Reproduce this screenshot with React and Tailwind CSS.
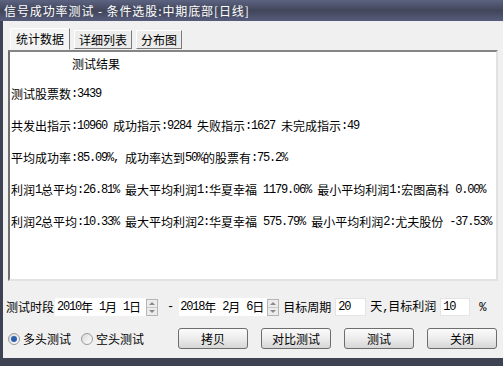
import React from 'react';

// ─── Text helper: ASCII runs get a half-width mono face, CJK stays in Noto ───

function Txt({ text }) {
  const parts = text.split(/([\x20-\x7e]+)/);
  return parts.map((p, i) =>
    /[\x20-\x7e]/.test(p) ? (
      <span key={i} className="font-['Liberation_Mono'] text-[12px] tracking-[-1.2px] whitespace-pre">
        {p}
      </span>
    ) : (
      <span key={i}>{p}</span>
    )
  );
}

const LINES = [
  '测试股票数:3439',
  '共发出指示:10960 成功指示:9284 失败指示:1627 未完成指示:49',
  '平均成功率:85.09%, 成功率达到50%的股票有:75.2%',
  '利润1总平均:26.81% 最大平均利润1:华夏幸福 1179.06% 最小平均利润1:宏图高科 0.00%',
  '利润2总平均:10.33% 最大平均利润2:华夏幸福 575.79% 最小平均利润2:尤夫股份 -37.53%',
];

const TABS = [
  { label: '统计数据', active: true },
  { label: '详细列表' },
  { label: '分布图' },
];

const BUTTONS = ['拷贝', '对比测试', '测试', '关闭'];

// ─── Small controls ─────────────────────────────────────────────────────────

function Spinner() {
  return (
    <div className="flex flex-col w-[12px] h-[17px] border border-[#b5b5b5] bg-[#ececec]">
      <div className="flex-1 flex items-center justify-center border-b border-[#c8c8c8]">
        <div className="w-0 h-0 border-l-[3px] border-r-[3px] border-b-[3px] border-l-transparent border-r-transparent border-b-[#8a8a8a]" />
      </div>
      <div className="flex-1 flex items-center justify-center">
        <div className="w-0 h-0 border-l-[3px] border-r-[3px] border-t-[3px] border-l-transparent border-r-transparent border-t-[#8a8a8a]" />
      </div>
    </div>
  );
}

function Radio({ checked, label }) {
  return (
    <div className="flex items-center gap-[3px]">
      <div className="w-[12px] h-[12px] rounded-full border border-[#9a9a9a] bg-gradient-to-br from-[#d8d8d8] to-[#ffffff] flex items-center justify-center">
        {checked && <div className="w-[6px] h-[6px] rounded-full bg-[#2a5fb0]" />}
      </div>
      <span className="text-[12px] text-black">{label}</span>
    </div>
  );
}

// ─── Window ──────────────────────────────────────────────────────────────────

export default function App() {
  return (
    <div className="w-[503px] h-[366px] bg-[#3e4354] flex flex-col overflow-hidden font-['Noto_Sans_CJK_SC',sans-serif] leading-none">
      {/* Title bar */}
      <div className="h-[21px] shrink-0 flex items-center pl-[4px] bg-gradient-to-b from-[#5c6381] via-[#41465a] to-[#575c7c]">
        <span className="text-white text-[12px] tracking-[0.9px]">
          信号成功率测试<span className="whitespace-pre"> - </span>条件选股:中期底部[日线]
        </span>
      </div>

      {/* Body */}
      <div className="flex-1 ml-[3px] mb-[8px] bg-[#f0f0f0] flex flex-col pt-[7px] pl-[5px] pr-[5px]">
        {/* Tabs */}
        <div className="flex items-end gap-[4px] pl-[2px] h-[22px]">
          {TABS.map((t) => (
            <div
              key={t.label}
              className={
                t.active
                  ? 'h-[22px] px-[5px] flex items-center bg-[#f4f4f4] border border-t-white border-l-white border-r-[#7a7a7a] border-b-[#f4f4f4] text-[12px] text-black'
                  : 'h-[19px] mb-[1px] px-[4px] flex items-center bg-[#ececec] border border-t-white border-l-white border-r-[#7a7a7a] border-b-[#7a7a7a] text-[12px] text-black'
              }
            >
              {t.label}
            </div>
          ))}
        </div>

        {/* Results panel */}
        <div className="h-[231px] bg-white border-2 border-t-[#858585] border-l-[#6f6f6f] border-r-[#e2e2e2] border-b-[#e2e2e2] flex flex-col pt-[5px] pl-[1px] text-[12px] text-black">
          <div className="h-[14px] flex items-center pl-[61px]">测试结果</div>
          <div className="flex flex-col gap-[18px] mt-[16px]">
            {LINES.map((l) => (
              <div key={l} className="h-[14px] flex items-center whitespace-pre">
                <Txt text={l} />
              </div>
            ))}
          </div>
        </div>

        {/* Date / target row */}
        <div className="flex items-center mt-[17px] h-[18px] text-[12px] text-black">
          <span className="ml-[-2px]">测试时段</span>
          <div className="ml-[1px] w-[91px] h-[18px] bg-white flex items-center pl-[2px] whitespace-pre">
            <Txt text="2010年 1月 1日" />
          </div>
          <Spinner />
          <span className="ml-[9px] font-['Liberation_Mono'] text-[12px]">-</span>
          <div className="ml-[5px] w-[88px] h-[18px] bg-white flex items-center pl-[1px] whitespace-pre">
            <Txt text="2018年 2月 6日" />
          </div>
          <Spinner />
          <span className="ml-[4px]">目标周期</span>
          <div className="ml-[4px] w-[31px] h-[18px] bg-white border border-[#e4e4e4] flex items-start pl-[2px] pt-[2px]">
            <Txt text="20" />
          </div>
          <span className="ml-[4px] whitespace-pre">
            <Txt text="天,目标利润" />
          </span>
          <div className="ml-[4px] w-[30px] h-[18px] bg-white border border-[#e4e4e4] flex items-start pl-[2px] pt-[2px]">
            <Txt text="10" />
          </div>
          <span className="ml-[9px]">
            <Txt text="%" />
          </span>
        </div>

        {/* Radios + buttons */}
        <div className="flex items-center mt-[12px] h-[21px]">
          <div className="flex items-center gap-[10px]">
            <Radio checked label="多头测试" />
            <Radio label="空头测试" />
          </div>
          <div className="ml-[34px] flex gap-[13px]">
            {BUTTONS.map((b) => (
              <div
                key={b}
                className="w-[70px] h-[21px] rounded-[3px] border border-[#6d6d6d] bg-gradient-to-b from-[#fbfbfb] via-[#ececec] to-[#d6d6d6] flex items-center justify-center text-[12px] text-black"
              >
                {b}
              </div>
            ))}
          </div>
        </div>
      </div>
    </div>
  );
}
